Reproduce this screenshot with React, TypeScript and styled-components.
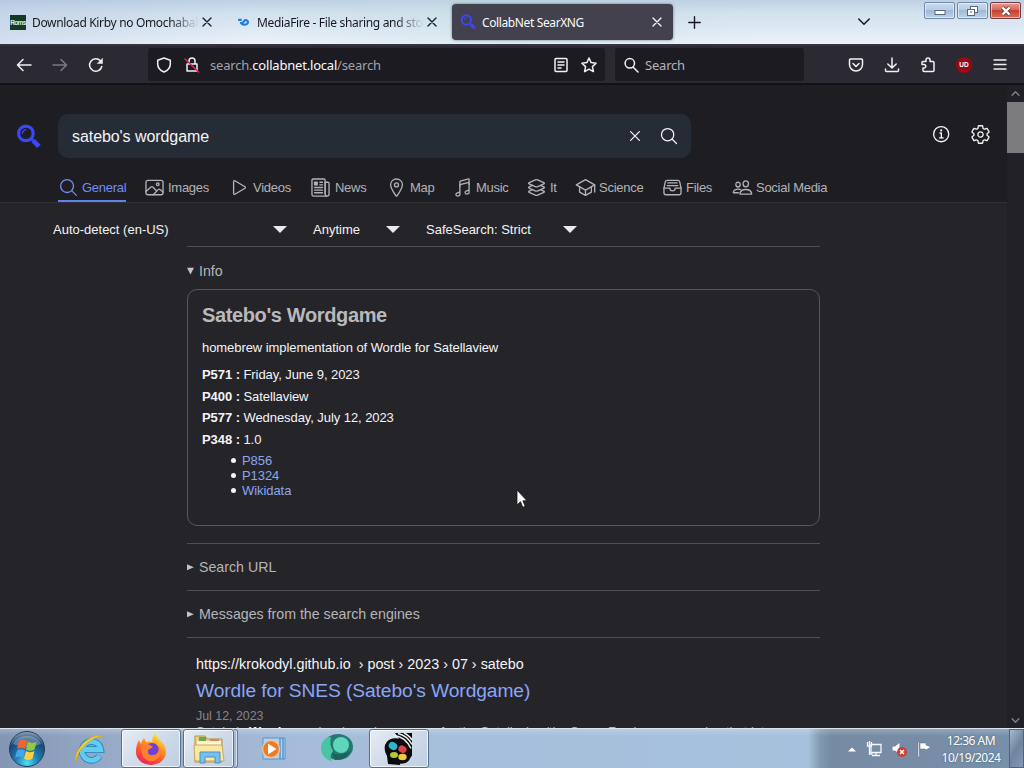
import React from 'react';
import styled, { createGlobalStyle } from 'styled-components';
import {
  IoSearchOutline, IoImageOutline, IoPlayOutline, IoNewspaperOutline, IoLocationOutline,
  IoMusicalNotesOutline, IoLayersOutline, IoSchoolOutline, IoFileTrayFullOutline,
  IoPeopleOutline, IoInformationCircleOutline, IoSettingsOutline, IoCloseOutline,
} from 'react-icons/io5';

const Global = createGlobalStyle`
  * { box-sizing: border-box; }
  body { margin: 0; overflow: hidden; background: #222327; }
  svg { display: block; flex: none; }
`;

const ui = `"Noto Sans", "Open Sans", sans-serif`;

const Desktop = styled.div`
  position: relative;
  width: 1024px;
  height: 768px;
  display: flex;
  flex-direction: column;
  overflow: hidden;
  font-family: "Liberation Sans", Arial, sans-serif;
  color: #f4f4f6;
`;

/* Tab strip */
const TabStrip = styled.header`
  height: 44px;
  flex: none;
  display: flex;
  padding-left: 2px;
  color: #16181d;
  background: linear-gradient(90deg, rgba(170,190,220,.35), rgba(255,255,255,0) 25%, rgba(190,220,222,.35) 50%, rgba(255,255,255,0) 75%),
    linear-gradient(#bed0e4 0, #d2e1ee 12px, #dde9f4 28px, #edf2fb 44px);
`;
const Tab = styled.div<{ $active?: boolean }>`
  width: ${p => (p.$active ? 221 : 225)}px;
  height: 36px;
  margin-top: 4px;
  padding: 0 ${p => (p.$active ? 8 : 12)}px 0 8px;
  display: flex;
  align-items: center;
  border-radius: 4px;
  color: ${p => (p.$active ? '#fbfbfe' : '#16181d')};
  background: ${p => (p.$active ? '#42414d' : 'transparent')};
  box-shadow: ${p => (p.$active ? '0 0 3px rgba(40,50,70,.6)' : 'none')};
`;
const Favicon = styled.span`
  width: 16px;
  margin-right: 6px;
  display: flex;
  justify-content: center;
`;
const RomsIcon = styled.span`
  width: 16px;
  height: 15px;
  background: #123c26;
  color: #e4efe8;
  font: bold 6.5px/15px "Liberation Sans", sans-serif;
  letter-spacing: -0.6px;
  text-align: center;
`;
const TabTitle = styled.span<{ $fade?: boolean; $track: number }>`
  width: 167px;
  overflow: hidden;
  white-space: nowrap;
  font: 12px/20px ${ui};
  padding-top: 1px;
  letter-spacing: ${p => p.$track}px;
  ${p => p.$fade && 'mask-image: linear-gradient(90deg, #000 83%, transparent 100%);'}
`;
const TabClose = styled.span`
  margin-left: auto;
`;
const PlusButton = styled.span`
  margin: 16px 0 0 15px;
`;
const ListTabs = styled.span`
  margin: 16px 0 0 157px;
`;
const WindowControls = styled.div`
  display: flex;
  gap: 2px;
  margin: 2px 0 0 54px;
`;
const WindowButton = styled.span<{ $close?: boolean }>`
  width: 31px;
  height: 17px;
  display: flex;
  align-items: center;
  justify-content: center;
  border: 1px solid ${p => (p.$close ? '#723c42' : '#7288a8')};
  border-radius: 2px;
  box-shadow: inset 0 0 0 1px rgba(255,255,255,.5);
  background: ${p => (p.$close
    ? 'linear-gradient(#e79d91, #d9685a 45%, #c8402e 50%, #d8705c)'
    : 'linear-gradient(#c8dbee, #b7cce3 45%, #9fb9d6 50%, #bdd3e9)')};
`;

/* Navigation bar */
const NavBar = styled.nav`
  height: 41px;
  flex: none;
  display: flex;
  align-items: center;
  border-top: 2px solid #34333e;
  border-bottom: 2px solid #121116;
  background: #2b2a33;
  color: #f0f0f5;
`;
const NavButtons = styled.div`
  display: flex;
  gap: 20px;
  padding-left: 16px;
  width: 148px;
`;
const Disabled = styled.span`
  opacity: 0.4;
`;
const Field = styled.div<{ $w: number; $gap?: number }>`
  width: ${p => p.$w}px;
  height: 33px;
  padding: 0 8px;
  display: flex;
  align-items: center;
  gap: ${p => p.$gap ?? 12}px;
  margin-right: 10px;
  background: #1c1b22;
  border-radius: 3px;
`;
const Address = styled.span`
  flex: 1;
  margin-left: -2px;
  white-space: nowrap;
  color: #a3a2ab;
  font: 13px/20px ${ui};
  letter-spacing: -0.2px;
  b { color: #fbfbfe; font-weight: 400; }
`;
const FieldHint = styled.span`
  color: #b3b2bb;
  font: 13px/20px ${ui};
  letter-spacing: -0.2px;
`;
const Toolbar = styled.div`
  display: flex;
  gap: 20px;
  margin-left: 34px;
`;
const Badge = styled.span`
  width: 16px;
  height: 16px;
  border-radius: 50%;
  background: #9a0812;
  color: #fff;
  text-align: center;
  font: bold 6.5px/15px "Liberation Sans", sans-serif;
`;

/* Page */
const Viewport = styled.div`
  flex: 1;
  min-height: 0;
  display: flex;
  overflow: hidden;
`;
const Page = styled.main`
  width: 1007px;
  background: #242429;
  overflow: hidden;
`;
const PageHeader = styled.div`
  height: 118px;
  padding-top: 29px;
  background: #1e1e22;
  border-bottom: 1px solid #303036;
`;
const SearchRow = styled.div`
  display: flex;
  align-items: center;
  height: 44px;
  padding-left: 16px;
`;
const Query = styled.div`
  width: 633px;
  height: 44px;
  margin-left: 17px;
  padding: 0 12px 0 14px;
  display: flex;
  align-items: center;
  gap: 14px;
  border-radius: 10px;
  background: #252c35;
  font-size: 16px;
  letter-spacing: -0.07px;
  span { flex: 1; padding-top: 1px; }
`;
const HeaderLinks = styled.div`
  display: flex;
  gap: 18px;
  margin: -3px 0 0 240px;
`;
const Categories = styled.div`
  display: flex;
  height: 33px;
  margin: 11px 0 0 58px;
`;
const Category = styled.span<{ $w: number; $gap: number; $active?: boolean }>`
  display: flex;
  align-items: center;
  gap: ${p => p.$gap}px;
  width: ${p => p.$w}px;
  height: 33px;
  padding-top: 3px;
  white-space: nowrap;
  font-size: 13px;
  letter-spacing: -0.27px;
  color: ${p => (p.$active ? '#6f8ff5' : '#b3b3b7')};
  ${p => p.$active && 'box-shadow: inset 0 -2px #5b83ea; margin-right: 18px;'}
`;
const Filters = styled.div`
  display: flex;
  align-items: center;
  height: 43px;
  padding: 10px 0 0 53px;
  font-size: 13px;
`;
const Select = styled.span<{ $w: number; $after?: number }>`
  display: flex;
  align-items: center;
  justify-content: space-between;
  width: ${p => p.$w}px;
  margin-right: ${p => p.$after ?? 0}px;
`;
const Caret = styled.i`
  border: 7px solid transparent;
  border-top-color: #e9e9ee;
  border-bottom: 0;
`;
const Results = styled.div`
  width: 633px;
  margin-left: 187px;
`;
const Section = styled.section<{ $h: number }>`
  height: ${p => p.$h}px;
  border-top: 1px solid #505054;
`;
const Summary = styled.div<{ $top: number }>`
  display: flex;
  align-items: center;
  gap: 4px;
  padding-top: ${p => p.$top}px;
  color: #b5b5b8;
  font-size: 14.2px;
  line-height: 16px;
`;
const InfoBox = styled.div`
  height: 237px;
  margin-top: 10px;
  padding: 14px;
  border: 1px solid #56565b;
  border-radius: 10px;
  font-size: 13px;
  letter-spacing: -0.07px;
  p { margin: 0; line-height: 15px; }
`;
const InfoTitle = styled.h2`
  margin: 0 0 14px;
  font-size: 20px;
  letter-spacing: -0.37px;
  line-height: 22px;
  color: #b9b9bc;
`;
const Facts = styled.div`
  padding-top: 9px;
  line-height: 21.6px;
`;
const Links = styled.ul`
  margin: 0;
  padding: 3px 0 0 29px;
  line-height: 15px;
  list-style: none;
  li { display: flex; align-items: center; gap: 6px; color: #8aa6ee; }
  li::before { content: ''; width: 5px; height: 5px; border-radius: 50%; background: #f4f4f6; }
`;
const Result = styled.article`
  padding: 17px 0 0 9px;
  white-space: nowrap;
`;
const ResultUrl = styled.div`
  font-size: 14.35px;
  line-height: 18px;
`;
const ResultTitle = styled.h3`
  margin: 6px 0 0;
  font-weight: 400;
  font-size: 19.2px;
  letter-spacing: -0.07px;
  line-height: 24px;
  color: #8aa6f5;
`;
const ResultDate = styled.div`
  margin-top: 6px;
  font-size: 12.4px;
  line-height: 15px;
  color: #85858a;
`;
const Snippet = styled.div`
  font-size: 12.8px;
  line-height: 16px;
  color: #b5b5b8;
  b { color: #f4f4f6; }
`;
const Scrollbar = styled.div`
  width: 17px;
  display: flex;
  flex-direction: column;
  align-items: center;
  justify-content: space-between;
  padding: 4px 0 3px;
  background: #212026;
  color: #828287;
`;
const Thumb = styled.span`
  width: 17px;
  height: 51px;
  margin: 4px 0 auto;
  background: #7b7b7d;
`;

/* Taskbar */
const Taskbar = styled.footer`
  height: 40px;
  flex: none;
  display: flex;
  border-top: 1px solid #dbe5ef;
  background: linear-gradient(rgba(255,255,255,.22), transparent 7px),
    linear-gradient(90deg, #8496b4 0, #98abc8 120px, #a5bdda 300px, #a6c1dd 808px, #8299b2 820px, #768ba3 832px, #7890aa 1024px);
`;
const Task = styled.span<{ $w: number; $open?: boolean; $after?: number }>`
  width: ${p => p.$w}px;
  height: 39px;
  margin-right: ${p => p.$after ?? 0}px;
  display: flex;
  align-items: center;
  justify-content: center;
  border-radius: 3px;
  ${p => p.$open && `
    border: 1px solid #5c6f88;
    box-shadow: inset 0 0 0 1px rgba(255,255,255,.7);
    background: linear-gradient(135deg, #e5ecf4, #cbd8e8 60%, #becfe2);
  `}
`;
const StackEdge = styled.span`
  width: 4px;
  height: 39px;
  margin-left: -4px;
  border: 1px solid #687b94;
  border-width: 1px 1px 1px 0;
  border-radius: 0 3px 3px 0;
  box-shadow: inset -1px 0 rgba(255,255,255,.6);
`;
const Tray = styled.div`
  display: flex;
  align-items: center;
  margin-left: auto;
`;
const TrayIcons = styled.div`
  display: flex;
  align-items: center;
  gap: 8px;
`;
const Clock = styled.div`
  width: 76px;
  padding-top: 1px;
  text-align: center;
  color: #fff;
  font: 12px/17px ${ui};
  letter-spacing: -0.5px;
  text-shadow: 0 0 2px rgba(30,50,80,.5);
`;
const ShowDesktop = styled.span`
  width: 15px;
  height: 39px;
  border: 1px solid #4e637c;
  background: linear-gradient(120deg, #a8b9cb, #6f859f 50%, #8499b1);
`;
const Pointer = styled.svg`
  position: absolute;
  left: 516px;
  top: 489px;
`;

const Line = ({ d, size = 16, w = 1.5, children }: { d: string; size?: number; w?: number; children?: React.ReactNode }) => (
  <svg width={size} height={size} viewBox="0 0 16 16" fill="none" stroke="currentColor" strokeWidth={w} strokeLinecap="round" strokeLinejoin="round">
    <path d={d} />{children}
  </svg>
);

const Cross = () => <Line size={16} w={1.25} d="M4 4l8 8M12 4l-8 8" />;

const Magnifier = ({ size }: { size: number }) => (
  <svg width={size} height={size} viewBox="0 0 24 24" fill="none" stroke="#3c47f5">
    <circle cx="9.5" cy="9" r="7" strokeWidth="3" />
    <path d="M6 9.500a4 4 0 0 1 4-4" strokeWidth="1.2" />
    <path d="M14.500 14l2 2" strokeWidth="3" />
    <path d="M16.500 16l5.500 5.500" strokeWidth="4.5" />
  </svg>
);

const categories = [
  { name: 'General', Icon: IoSearchOutline, w: 68, gap: 3, active: true },
  { name: 'Images', Icon: IoImageOutline, w: 85, gap: 3 },
  { name: 'Videos', Icon: IoPlayOutline, w: 81, gap: 3 },
  { name: 'News', Icon: IoNewspaperOutline, w: 76, gap: 4 },
  { name: 'Map', Icon: IoLocationOutline, w: 66, gap: 3 },
  { name: 'Music', Icon: IoMusicalNotesOutline, w: 74, gap: 3 },
  { name: 'It', Icon: IoLayersOutline, w: 49, gap: 3 },
  { name: 'Science', Icon: IoSchoolOutline, w: 87, gap: 3 },
  { name: 'Files', Icon: IoFileTrayFullOutline, w: 70, gap: 3 },
  { name: 'Social Media', Icon: IoPeopleOutline, w: 100, gap: 3 },
];

const facts = [
  ['P571', 'Friday, June 9, 2023'],
  ['P400', 'Satellaview'],
  ['P577', 'Wednesday, July 12, 2023'],
  ['P348', '1.0'],
];

const Triangle = ({ open }: { open?: boolean }) => (
  <svg width="8" height="8" viewBox="0 0 8 8" fill="#c4c4c7">
    <path d={open ? 'M0 0.8h7L3.5 7.5z' : 'M0 1.2v6l6.800-3z'} />
  </svg>
);

const StartOrb = () => (
  <svg width="38" height="38" viewBox="0 0 38 38">
    <defs>
      <radialGradient id="orb" cx=".5" cy=".9" r=".95">
        <stop offset="0" stopColor="#4fe0f4" /><stop offset=".35" stopColor="#1d7fb6" />
        <stop offset=".7" stopColor="#1c4773" /><stop offset="1" stopColor="#a9bdd0" />
      </radialGradient>
    </defs>
    <circle cx="19" cy="19" r="17.5" fill="url(#orb)" stroke="#223e5e" />
    <path d="M5 14a15 13 0 0 1 28 0q-14 6-28 0" fill="#fff" opacity=".28" />
    <path d="M11 11q4-3 8 0l-2 8q-4-2-8 0z" fill="#ef6430" />
    <path d="M20 11.500q4 3 8.500 0l-2 8q-4 2.500-8.500 0z" fill="#95c83e" />
    <path d="M9 20.500q4-2.500 8 0l-2 7.500q-4-3-8 0z" fill="#4aa3e4" />
    <path d="M18 21q4 2.500 8.500 0l-2 7.500q-4 3-8.500 0z" fill="#ffd040" />
  </svg>
);

const ExplorerE = () => (
  <svg width="32" height="32" viewBox="0 0 34 34" fill="none">
    <path d="M28 24.500a10 10 0 1 1 1.500-7H11" stroke="#1d83bd" strokeWidth="7" />
    <path d="M28 24.500a10 10 0 1 1 1.500-7H11" stroke="#61cbf0" strokeWidth="5.200" />
    <path d="M4 30C-1 26 8 10 20 4.500c6-3 11-3 11 1C29 2 23 5 19 8 9 15 3 24 4 30z" fill="#f3cd2f" stroke="#cf9f1a" strokeWidth=".6" />
  </svg>
);

const Firefox = () => (
  <svg width="32" height="34" viewBox="0 0 32 34">
    <defs>
      <linearGradient id="fox" x1=".8" y1="0" x2=".3" y2="1">
        <stop offset="0" stopColor="#fff04a" /><stop offset=".4" stopColor="#ff9a20" />
        <stop offset=".7" stopColor="#ff5030" /><stop offset="1" stopColor="#e62265" />
      </linearGradient>
    </defs>
    <path d="M4 8l2 4q1-4 3-6l2 4q3-1 6 0Q17 5 20 1q2 5 6 8 5 5 5 11a15 13 0 0 1-30 0q0-7 3-12z" fill="url(#fox)" />
    <circle cx="17" cy="18" r="7" fill="#7040d2" />
    <path d="M6 15q5-4 9-2l3 2-5 3q-1 6 5 5 6 0 6-9 3 4 1 9-3 7-11 6-8-2-8-14z" fill="#ff812d" />
  </svg>
);

const FolderIcon = () => (
  <svg width="34" height="34" viewBox="0 0 34 34">
    <path d="M3 4h10l2 3h15v23H3z" fill="#ecd384" stroke="#b79540" />
    <path d="M7 5h7v4H7z" fill="#64aa55" /><path d="M18 7h9v3h-9z" fill="#d98160" />
    <path d="M5 9h24v5H5z" fill="#fff7d8" />
    <path d="M2 13h28l2 16H3z" fill="#f8e8a8" stroke="#cda951" />
    <path d="M8 31V20h20v11h-5v-6H13v6z" fill="#78bfea" stroke="#4b8fc3" />
  </svg>
);

const MediaPlayer = () => (
  <svg width="28" height="28" viewBox="0 0 28 28">
    <path d="M4 3h22v21H4z" fill="#b4d2ec" stroke="#5c92c4" />
    <path d="M21 3v21M24 3v21" stroke="#2c76b7" />
    <circle cx="12" cy="14" r="8.500" fill="#f07a22" stroke="#e8c2a2" strokeWidth="1.500" />
    <path d="M9 8.500l8.500 5.500L9 19.500z" fill="#fff" />
  </svg>
);

const GreenGlobe = () => (
  <svg width="34" height="32" viewBox="0 0 34 32">
    <ellipse cx="18" cy="14" rx="15" ry="13" fill="#23796f" />
    <path d="M11 4C5 4 1 9 1 15s4 12 11 13q-3-5 1-10-4-6-2-14z" fill="#48c5a2" />
    <circle cx="21" cy="12" r="8" fill="#5fd5bd" />
    <path d="M12 20q8 4 18-2-3 9-15 9z" fill="#1b625a" />
  </svg>
);

const Reel = () => (
  <svg width="30" height="36" viewBox="0 0 30 36">
    <path d="M3 25l1 8 12 1V21zM11 2h17v24z" fill="#090909" />
    <ellipse cx="14" cy="20" rx="14.500" ry="11.500" transform="rotate(40 14 20)" fill="#0b0b0c" />
    <path d="M10 4.500q11 1 17 13M14 2.500q9 2 14 11M20 2q5 2 8 7" stroke="#eee" strokeWidth="1.500" fill="none" />
    <ellipse cx="9" cy="15" rx="4.500" ry="3.700" transform="rotate(30 9 15)" fill="#30b4cd" />
    <ellipse cx="18.500" cy="18" rx="4.200" ry="3.500" transform="rotate(30 18 18)" fill="#e23f4c" />
    <ellipse cx="10" cy="24" rx="4" ry="3" fill="#b6c934" />
    <ellipse cx="18.500" cy="26" rx="4.200" ry="3.200" fill="#efce38" />
  </svg>
);

export default function App() {
  return (
    <Desktop>
      <Global />
      <TabStrip>
        <Tab>
          <Favicon><RomsIcon>Roms</RomsIcon></Favicon>
          <TabTitle $fade $track={-0.33}>Download Kirby no Omochabako</TabTitle>
          <TabClose><Cross /></TabClose>
        </Tab>
        <Tab>
          <Favicon>
            <svg width="13" height="9" viewBox="0 0 14 10" fill="none" stroke="#197ee8" strokeWidth="2.400">
              <path d="M1 2h4M4 4.500a4 3 0 0 0 8 0 2.500 2.500 0 0 0-4-1.500c-2 2-1 3-3 3" />
            </svg>
          </Favicon>
          <TabTitle $fade $track={-0.33}>MediaFire - File sharing and storage</TabTitle>
          <TabClose><Cross /></TabClose>
        </Tab>
        <Tab $active>
          <Favicon><Magnifier size={16} /></Favicon>
          <TabTitle $track={-0.38}>CollabNet SearXNG</TabTitle>
          <TabClose><Cross /></TabClose>
        </Tab>
        <PlusButton><Line size={13} w={1.700} d="M8 1v14M1 8h14" /></PlusButton>
        <ListTabs><Line size={12} w={2} d="M1 4l7 7 7-7" /></ListTabs>
        <WindowControls>
          <WindowButton>
            <svg width="12" height="8"><rect x="1" y="3.500" width="10" height="4" fill="#fff" stroke="#59677c" /></svg>
          </WindowButton>
          <WindowButton>
            <svg width="13" height="12" fill="#fff" stroke="#59677c">
              <rect x="4.500" y="1.500" width="7" height="6" /><rect x="1.500" y="4.500" width="7" height="6" /><path d="M4 7h2" />
            </svg>
          </WindowButton>
          <WindowButton $close>
            <svg width="14" height="12" fill="none"><path d="M3.500 2.500l7 7M10.500 2.500l-7 7" stroke="#6a4147" strokeWidth="4" /><path d="M3.500 2.500l7 7M10.500 2.500l-7 7" stroke="#fff" strokeWidth="2.400" /></svg>
          </WindowButton>
        </WindowControls>
      </TabStrip>

      <NavBar>
        <NavButtons>
          <Line d="M15 8H1.500M7 2.500L1.500 8 7 13.500" />
          <Disabled><Line d="M1 8h13.500M9 2.500L14.500 8 9 13.500" /></Disabled>
          <Line d="M13.800 9.500A6.200 6.200 0 1 1 12.500 4"><path d="M14.500 1.500v5h-5z" fill="currentColor" strokeWidth=".5" /></Line>
        </NavButtons>
        <Field $w={457}>
          <Line d="M8 1l6.300 2.200v3.800c0 4-2.800 6.600-6.300 8-3.500-1.400-6.300-4-6.300-8V3.200z" />
          <Line d="M3 7h10v7H3zM5 7V4a3 3 0 0 1 6 0v3"><path d="M1 2l13.500 13" stroke="#e22850" /></Line>
          <Address>search.<b>collabnet.local</b>/search</Address>
          <Line d="M3 1.500h10a1 1 0 0 1 1 1v11a1 1 0 0 1-1 1H3a1 1 0 0 1-1-1v-11a1 1 0 0 1 1-1zM5 5h6M5 8h6M5 11h3" />
          <Line d="M8 1l2.100 4.600 5 .6-3.700 3.400 1 5L8 12.100l-4.400 2.500 1-5L.9 6.200l5-.6z" />
        </Field>
        <Field $w={189} $gap={6}>
          <Line d="M10.200 10.200L15 15"><circle cx="6.800" cy="6.300" r="4.700" /></Line>
          <FieldHint>Search</FieldHint>
        </Field>
        <Toolbar>
          <Line d="M2.500 2h11a1 1 0 0 1 1 1v4.500a6.500 6.500 0 0 1-13 0V3a1 1 0 0 1 1-1zM5 6.500l3 3 3-3" />
          <Line d="M8 1v10M3.800 7L8 11l4.200-4M1.500 12v1.500a1 1 0 0 0 1 1h11a1 1 0 0 0 1-1V12" />
          <Line d="M6 4.500V3a2 2 0 0 1 4 0v1.500h3a1 1 0 0 1 1 1v8a1 1 0 0 1-1 1H4a1 1 0 0 1-1-1V11h1a1.600 1.600 0 0 0 0-3.500H2V5.500a1 1 0 0 1 1-1z" />
          <Badge>UD</Badge>
          <Line w={1.300} d="M2 3h12M2 7.500h12M2 12h12" />
        </Toolbar>
      </NavBar>

      <Viewport>
        <Page>
          <PageHeader>
            <SearchRow>
              <Magnifier size={25} />
              <Query>
                <span>satebo's wordgame</span>
                <IoCloseOutline size={20} />
                <IoSearchOutline size={20} />
              </Query>
              <HeaderLinks>
                <IoInformationCircleOutline size={21} />
                <IoSettingsOutline size={21} />
              </HeaderLinks>
            </SearchRow>
            <Categories>
              {categories.map(({ name, Icon, w, gap, active }) => (
                <Category key={name} $w={w} $gap={gap} $active={active}><Icon size={21} />{name}</Category>
              ))}
            </Categories>
          </PageHeader>
          <Filters>
            <Select $w={234} $after={26}>Auto-detect (en-US)<Caret /></Select>
            <Select $w={87} $after={26}>Anytime<Caret /></Select>
            <Select $w={151}>SafeSearch: Strict<Caret /></Select>
          </Filters>
          <Results>
            <Section $h={297}>
              <Summary $top={16}><Triangle open />Info</Summary>
              <InfoBox>
                <InfoTitle>Satebo's Wordgame</InfoTitle>
                <p>homebrew implementation of Wordle for Satellaview</p>
                <Facts>
                  {facts.map(([k, v]) => <div key={k}><b>{k} :</b> {v}</div>)}
                </Facts>
                <Links><li>P856</li><li>P1324</li><li>Wikidata</li></Links>
              </InfoBox>
            </Section>
            <Section $h={47}><Summary $top={15}><Triangle />Search URL</Summary></Section>
            <Section $h={47}><Summary $top={15}><Triangle />Messages from the search engines</Summary></Section>
            <Section $h={100}>
              <Result>
                <ResultUrl>https://krokodyl.github.io&nbsp; › post › 2023 › 07 › satebo</ResultUrl>
                <ResultTitle>Wordle for SNES (Satebo's Wordgame)</ResultTitle>
                <ResultDate>Jul 12, 2023</ResultDate>
                <Snippet>Satebo's <b>Wordgame</b> is a homebrew game for the Satellaview/the Super Famicom expansion that lets</Snippet>
              </Result>
            </Section>
          </Results>
        </Page>
        <Scrollbar>
          <Line size={9} w={2.500} d="M2 11l6-6 6 6" />
          <Thumb />
          <Line size={9} w={2.500} d="M2 5l6 6 6-6" />
        </Scrollbar>
      </Viewport>

      <Taskbar>
        <Task $w={54} $after={8}><StartOrb /></Task>
        <Task $w={54} $after={5}><ExplorerE /></Task>
        <Task $w={60} $after={2} $open><Firefox /></Task>
        <Task $w={51} $open><FolderIcon /></Task>
        <Task $w={7}><StackEdge /></Task>
        <Task $w={64}><MediaPlayer /></Task>
        <Task $w={64}><GreenGlobe /></Task>
        <Task $w={60} $open><Reel /></Task>
        <Tray>
          <TrayIcons>
            <svg width="10" height="6"><path d="M1 5.500l4-4 4 4z" fill="#fff" /></svg>
            <svg width="18" height="18" fill="none" stroke="#f4f8fc" strokeWidth="1.300">
              <path d="M6 4.500h10v8H6zM7 15.500h8M11 13v2" /><path d="M2.500 2v4h4V2M4.500 1v4M4.500 6v8h3" />
            </svg>
            <svg width="17" height="18">
              <path d="M1 6h3l5-4v13l-5-4H1z" fill="#fff" stroke="#71849a" />
              <circle cx="11" cy="12" r="5" fill="#d33c35" /><path d="M9 10l4 4M13 10l-4 4" stroke="#fff" strokeWidth="1.500" />
            </svg>
            <svg width="17" height="18" fill="#fff"><path d="M2 2h1.500v15H2zM4 3h6v2l5 2-5 3-1-1H4z" stroke="#4c6078" strokeWidth=".5" /></svg>
          </TrayIcons>
          <Clock>12:36 AM<br />10/19/2024</Clock>
          <ShowDesktop />
        </Tray>
      </Taskbar>
      <Pointer width="12" height="20" viewBox="0 0 12 20">
        <path d="M1 1v15l3.500-3.300 2.300 5.600 2.400-1-2.300-5.500H11z" fill="#fff" stroke="#111" strokeWidth=".8" />
      </Pointer>
    </Desktop>
  );
}
